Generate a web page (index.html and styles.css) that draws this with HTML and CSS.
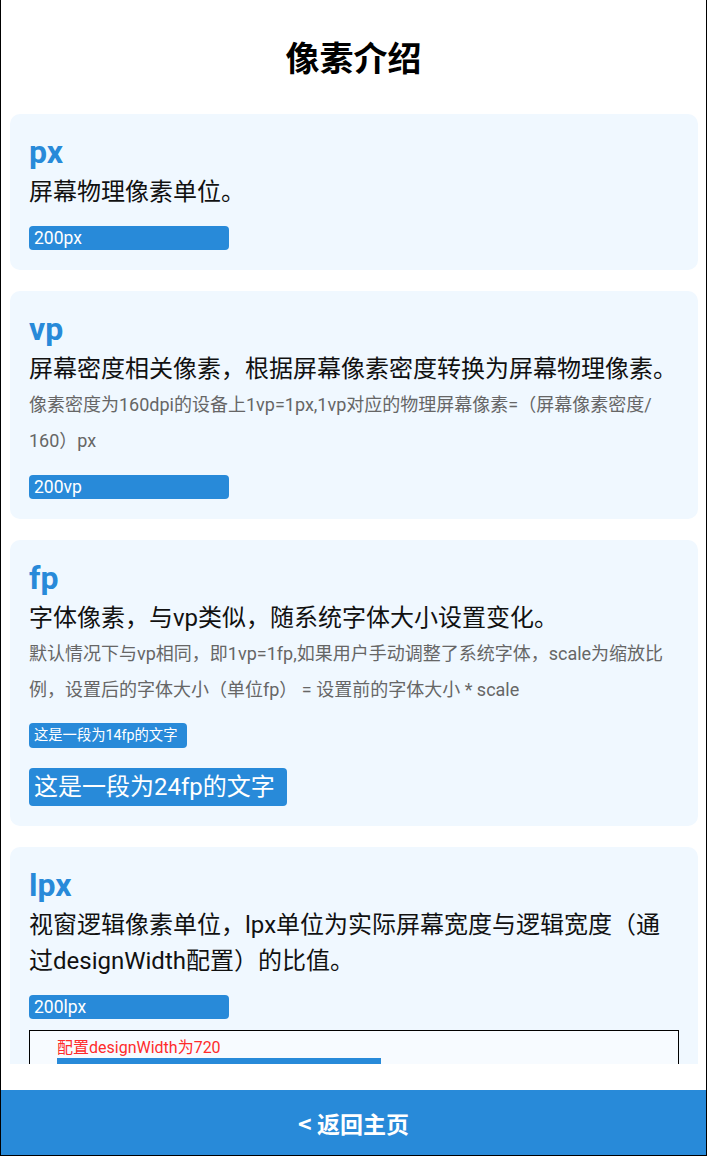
FILE: index.html
```html
<!DOCTYPE html>
<html lang="zh-CN">
<head>
<meta charset="utf-8">
<title>像素介绍</title>
<link rel="stylesheet" href="styles.css">
</head>
<body>
<div class="page">
  <header class="header"><h1 class="title">像素介绍</h1></header>
  <main class="scroll">
    <section class="card">
      <h2 class="unit">px</h2>
      <p class="desc">屏幕物理像素单位。</p>
      <div class="bar">200px</div>
    </section>
    <section class="card">
      <h2 class="unit">vp</h2>
      <p class="desc">屏幕密度相关像素，根据屏幕像素密度转换为屏幕物理像素。</p>
      <p class="note">像素密度为160dpi的设备上1vp=1px,1vp对应的物理屏幕像素=（屏幕像素密度/<br>160）px</p>
      <div class="bar">200vp</div>
    </section>
    <section class="card">
      <h2 class="unit">fp</h2>
      <p class="desc">字体像素，与vp类似，随系统字体大小设置变化。</p>
      <p class="note">默认情况下与vp相同，即1vp=1fp,如果用户手动调整了系统字体，scale为缩放比<br>例，设置后的字体大小（单位fp） = 设置前的字体大小 * scale</p>
      <div class="tags">
        <span class="tag tag-small">这是一段为14fp的文字</span>
        <span class="tag tag-big">这是一段为24fp的文字</span>
      </div>
    </section>
    <section class="card">
      <h2 class="unit">lpx</h2>
      <p class="desc">视窗逻辑像素单位，lpx单位为实际屏幕宽度与逻辑宽度（通<br>过designWidth配置）的比值。</p>
      <div class="bar">200lpx</div>
      <div class="demo">
        <p class="demo-label">配置designWidth为720</p>
        <div class="demo-bar">200lpx</div>
      </div>
    </section>
  </main>
  <footer class="footer">&lt; 返回主页</footer>
</div>
</body>
</html>
```

FILE: styles.css
```css
* { box-sizing: border-box; }
html, body { margin: 0; padding: 0; }
body {
  font-family: Roboto, "Noto Sans CJK SC", sans-serif;
  background: #fff;
}
.page {
  width: 707px;
  height: 1156px;
  display: flex;
  flex-direction: column;
  border-left: 1px solid #000;
  border-right: 1px solid #000;
  border-bottom: 1px solid #000;
  overflow: hidden;
}
.header {
  height: 114px;
  flex: none;
  display: flex;
  align-items: center;
  justify-content: center;
}
.title {
  margin: 0;
  font-family: "Noto Sans CJK SC", sans-serif;
  font-size: 34px;
  font-weight: 700;
  line-height: 40px;
  color: #000;
}
.scroll {
  flex: 1;
  min-height: 0;
  overflow: hidden;
  padding: 0 8px 0 9px;
  margin-bottom: 26px;
}
.card {
  background: #f0f8ff;
  border-radius: 10px;
  padding: 20px 19px;
  margin-bottom: 21px;
}
.unit {
  margin: 0;
  font-size: 32px;
  font-weight: 700;
  line-height: 36px;
  color: #288ad9;
}
.desc {
  margin: 4px 0 0;
  font-size: 24px;
  line-height: 36px;
  color: #111;
}
.note {
  margin: 0;
  font-size: 18px;
  line-height: 36px;
  color: #666;
}
.bar {
  margin-top: 16px;
  width: 200px;
  height: 24px;
  border-radius: 4px;
  background: #288ad9;
  color: #fff;
  font-size: 17.5px;
  line-height: 24px;
  padding-left: 5px;
}
.tags {
  margin-top: 15px;
  display: flex;
  flex-direction: column;
  align-items: flex-start;
  gap: 20px;
}
.tag {
  display: block;
  background: #288ad9;
  color: #fff;
  border-radius: 4px;
  padding: 0 10px 0 5px;
  white-space: nowrap;
}
.tag-small {
  font-size: 14.3px;
  height: 25px;
  line-height: 25px;
}
.tag-big {
  font-size: 24px;
  height: 38px;
  line-height: 38px;
  padding-right: 12px;
}
.demo {
  margin-top: 11px;
  border: 1px solid #000;
  background: #f7fbff;
  padding: 7px 27px 10px;
  height: 120px;
}
.demo-label {
  margin: 0;
  font-size: 16px;
  line-height: 20px;
  color: #ff2b2b;
}
.demo-bar {
  width: 324px;
  height: 24px;
  background: #288ad9;
  color: #fff;
  font-size: 17px;
  line-height: 24px;
  padding-left: 2px;
}
.footer {
  flex: none;
  height: 65px;
  background: #288ad9;
  color: #fff;
  font-family: "Noto Sans CJK SC", sans-serif;
  font-size: 23px;
  font-weight: 700;
  display: flex;
  align-items: center;
  justify-content: center;
}
```
